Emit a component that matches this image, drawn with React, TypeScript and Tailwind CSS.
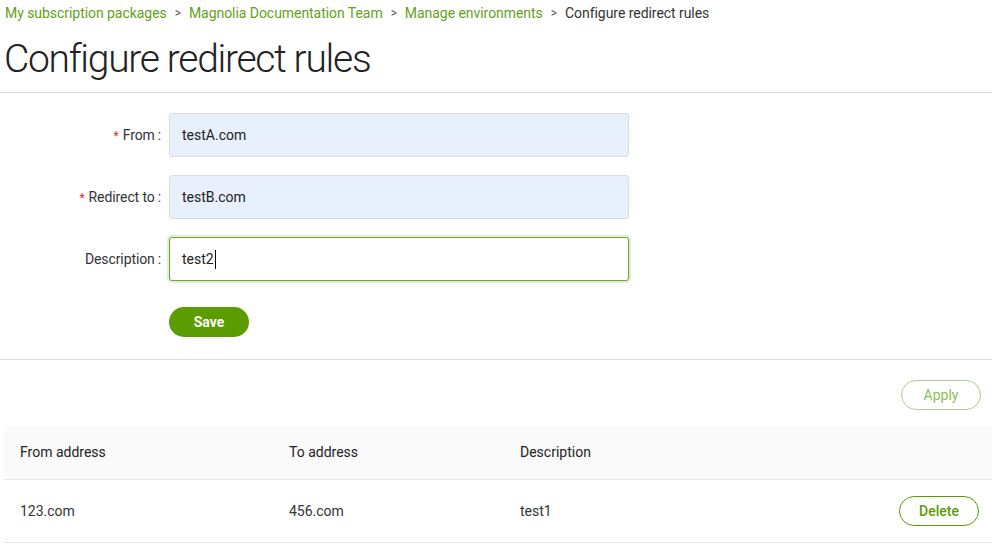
import React from "react";

const rows = [{ from: "123.com", to: "456.com", description: "test1" }];

const FormRow = ({
  label,
  required,
  value,
  focused,
}: {
  label: string;
  required?: boolean;
  value: string;
  focused?: boolean;
}) => (
  <div className="flex items-center h-[44px]">
    <div className="w-[161px] text-right text-[14px] text-[#333] tracking-[-0.1px]">
      {required && <span className="text-[#f5222d] mr-[4px] text-[12px]">*</span>}
      {label}
      <span className="ml-[3px]">:</span>
    </div>
    <div
      className={
        focused
          ? "ml-[8px] w-[460px] h-[44px] rounded-[3px] border border-[#6ea531] bg-white shadow-[0_0_0_2px_rgba(110,165,49,0.2)] flex items-center px-[12px] text-[14px] text-[#222]"
          : "ml-[8px] w-[460px] h-[44px] rounded-[3px] border border-[#d9dde3] bg-[#e8f0fe] flex items-center px-[12px] text-[14px] text-[#222]"
      }
    >
      {value}
      {focused && <span className="inline-block w-[1px] h-[19px] bg-black ml-[1px]" />}
    </div>
  </div>
);

export default function App() {
  return (
    <div
      className="w-[992px] h-[549px] bg-white overflow-hidden"
      style={{ fontFamily: "Roboto, 'Liberation Sans', sans-serif" }}
    >
      <nav className="px-[5px] pt-[4px] text-[14px] leading-[18px] flex items-center tracking-[-0.05px]">
        <span className="text-[#63a11c]">My subscription packages</span>
        <span className="mx-[8px] text-[#555] text-[12px]">&gt;</span>
        <span className="text-[#63a11c]">Magnolia Documentation Team</span>
        <span className="mx-[8px] text-[#555] text-[12px]">&gt;</span>
        <span className="text-[#63a11c]">Manage environments</span>
        <span className="mx-[8px] text-[#555] text-[12px]">&gt;</span>
        <span className="text-[#333]">Configure redirect rules</span>
      </nav>
      <h1 className="px-[4px] mt-[15px] text-[39px] leading-[44px] font-light text-[#222] tracking-[-1.3px]">
        Configure redirect rules
      </h1>
      <div className="mt-[11px] border-t border-[#dcdcdc]" />

      <div className="pt-[20px] flex flex-col gap-[18px]">
        <FormRow label="From" required value="testA.com" />
        <FormRow label="Redirect to" required value="testB.com" />
        <FormRow label="Description" value="test2" focused />
      </div>
      <div className="pl-[169px] mt-[26px]">
        <button className="w-[80px] h-[30px] rounded-full bg-[#5b9c00] text-white text-[14px] font-bold">
          Save
        </button>
      </div>
      <div className="mt-[22px] border-t border-[#dcdcdc]" />

      <div className="flex justify-end pr-[11px] pt-[20px]">
        <button className="w-[80px] h-[30px] rounded-full border border-[#a9d08a] text-[#8cc059] text-[14px]">
          Apply
        </button>
      </div>

      <div className="ml-[4px] mt-[16px]">
        <div className="flex h-[54px] items-center bg-[#fafafa] border-b border-[#e8e8e8] text-[14px] text-[#222]">
          <div className="w-[269px] pl-[16px]">From address</div>
          <div className="w-[231px] pl-[16px]">To address</div>
          <div className="flex-1 pl-[16px]">Description</div>
        </div>
        {rows.map((r) => (
          <div
            key={r.from}
            className="flex h-[63px] items-center border-b border-[#e8e8e8] text-[14px] text-[#333]"
          >
            <div className="w-[269px] pl-[16px]">{r.from}</div>
            <div className="w-[231px] pl-[16px]">{r.to}</div>
            <div className="flex-1 pl-[16px]">{r.description}</div>
            <div className="pr-[13px]">
              <button className="w-[80px] h-[30px] rounded-full border border-[#5b9c00] text-[#5b9c00] text-[14px] font-medium">
                Delete
              </button>
            </div>
          </div>
        ))}
      </div>
    </div>
  );
}
